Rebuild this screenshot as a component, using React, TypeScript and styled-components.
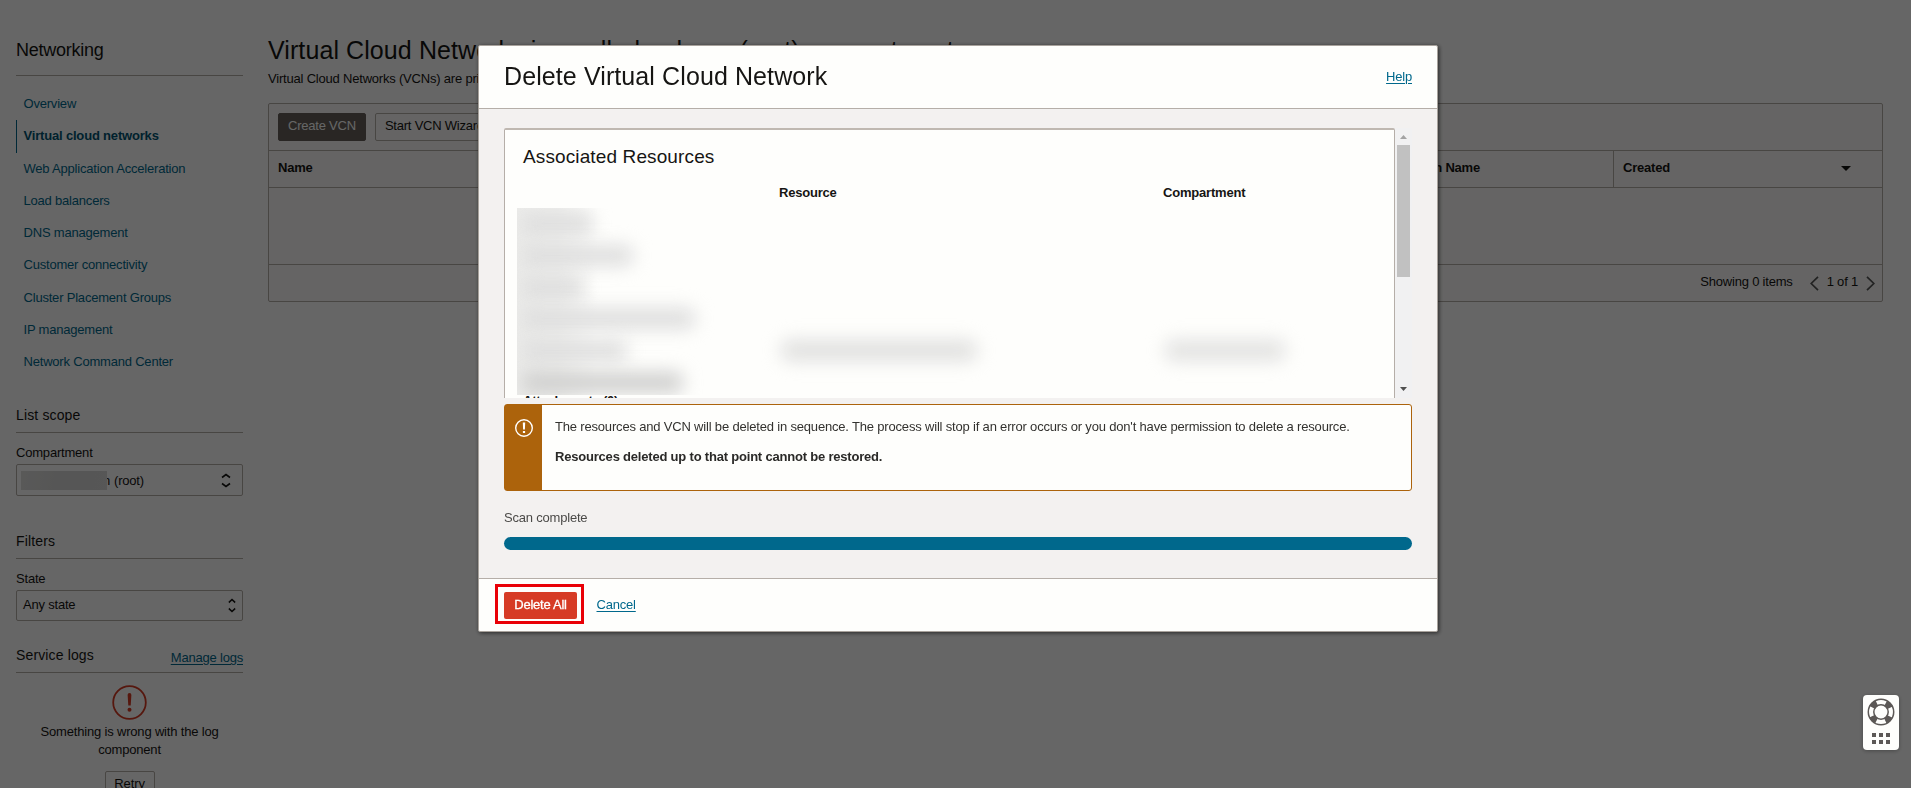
import React from "react";
import styled, { createGlobalStyle, css } from "styled-components";

const c = {
  text: "#161513",
  muted: "#4b4a48",
  link: "#00688c",
  line: "#b5aea8",
  surface: "#fefefc",
  sunken: "#f3f1f0",
  red: "#d63b25",
  amber: "#ac630c",
};

const Global = createGlobalStyle`
  * { box-sizing: border-box; }
  html, body { margin: 0; height: 100%; overflow: hidden; }
  body {
    background: #fff;
    color: ${c.text};
    font: 13px/18px "Liberation Sans", Arial, sans-serif;
    letter-spacing: -0.2px;
  }
  h1, h2, h3, p, ul { margin: 0; padding: 0; font-weight: 400; }
`;

const Page = styled.div`
  display: flex;
  width: 100vw;
  height: 100vh;
  overflow: hidden;
`;

const Link = styled.a`
  color: ${c.link};
  text-decoration: underline;
  text-underline-offset: 2px;
`;

/* ---------- sidebar ---------- */

const Sidebar = styled.aside`
  flex: none;
  width: 227px;
  margin-left: 16px;
  padding-top: 24px;
`;

const SideTitle = styled.h2`
  height: 52px;
  border-bottom: 1px solid ${c.line};
  font-size: 18px;
  line-height: 52px;
  letter-spacing: -0.25px;
`;

const Nav = styled.nav`
  display: flex;
  flex-direction: column;
  height: 303px;
  padding-top: 12px;
`;

const NavItem = styled.a<{ $active?: boolean }>`
  height: 32.3px;
  padding-left: 6.5px;
  border-left: 1px solid transparent;
  line-height: 32px;
  color: ${c.link};
  ${(p) =>
    p.$active &&
    css`
      border-color: ${c.link};
      color: #005472;
      font-weight: 700;
      letter-spacing: -0.18px;
    `}
`;

const SectionHead = styled.div<{ $top: number }>`
  display: flex;
  justify-content: space-between;
  align-items: flex-start;
  height: 27px;
  margin-top: ${(p) => p.$top}px;
  border-bottom: 1px solid ${c.line};
`;

const SectionTitle = styled.h3`
  font-size: 14px;
  line-height: 18px;
  letter-spacing: 0.14px;
`;

const ManageLink = styled(Link)`
  padding-top: 3px;
`;

const FieldLabel = styled.div`
  margin-top: 11px;
  height: 20px;
`;

const SelectBox = styled.div<{ $h: number; $right: number }>`
  display: flex;
  align-items: center;
  justify-content: space-between;
  height: ${(p) => p.$h}px;
  padding: 0 ${(p) => p.$right}px 0 6px;
  border: 1px solid ${c.line};
  border-radius: 2px;
`;

const Scope = styled.span`
  display: flex;
  align-items: center;
  margin-left: -2px;
  padding-top: 1px;
`;

const SelectValue = styled.span`
  padding-bottom: 1px;
`;

const Redacted = styled.span`
  width: 86px;
  height: 19px;
  margin-top: -1px;
  background: linear-gradient(100deg, #dfdfdd, #d6d6d6 50%, #d9d9d9);
`;

const ClippedLetter = styled.span`
  display: flex;
  justify-content: flex-end;
  width: 3px;
  margin-right: 4px;
  overflow: hidden;
`;

const LogError = styled.div`
  display: flex;
  flex-direction: column;
  align-items: center;
  padding: 12px 20px 0;
  text-align: center;
  letter-spacing: -0.18px;
  p { margin-top: 3px; }
`;

const RetryButton = styled.button`
  width: 50px;
  height: 28px;
  margin-top: 12px;
  padding: 0 0 3px;
  border: 1px solid ${c.line};
  border-radius: 2px;
  background: transparent;
  color: ${c.text};
  font: inherit;
  letter-spacing: -0.1px;
`;

/* ---------- main list ---------- */

const Main = styled.main`
  flex: none;
  width: 1615px;
  margin-left: 25px;
  padding-top: 33px;
`;

const Title = styled.h1`
  font-size: 25px;
  line-height: 34px;
  letter-spacing: 0.09px;
  white-space: nowrap;
`;

const Subtitle = styled.p`
  margin-top: 3px;
  height: 33px;
  white-space: nowrap;
`;

const Panel = styled.section`
  display: flex;
  flex-direction: column;
  height: 199px;
  border: 1px solid ${c.line};
  border-radius: 2px;
  background: #fcfbfa;
`;

const Toolbar = styled.div`
  display: flex;
  gap: 9px;
  height: 47px;
  padding: 9px;
  border-bottom: 1px solid ${c.line};
`;

const Button = styled.button<{ $dark?: boolean }>`
  height: 28px;
  padding: 0 9px 3px;
  border: 1px solid ${(p) => (p.$dark ? "#665f5b" : c.line)};
  border-radius: 2px;
  background: ${(p) => (p.$dark ? "#665f5b" : "transparent")};
  color: ${(p) => (p.$dark ? "#fff" : c.text)};
  font: inherit;
  letter-spacing: -0.22px;
  white-space: nowrap;
`;

const HeadRow = styled.div`
  display: flex;
  height: 37px;
  border-bottom: 1px solid ${c.line};
`;

const HeadCell = styled.div`
  flex: 1 1 0;
  padding: 8px 9px 0;
  font-weight: 700;
`;

const DomainCell = styled(HeadCell)`
  flex: none;
  padding-right: 133px;
`;

const CreatedCell = styled(HeadCell)`
  display: flex;
  justify-content: space-between;
  flex: 0 0 269px;
  padding-right: 31px;
  border-left: 1px solid ${c.line};
  svg { margin-top: 7px; }
`;

const EmptyRow = styled.div`
  height: 77px;
  border-bottom: 1px solid ${c.line};
`;

const Footer = styled.div`
  display: flex;
  flex: 1;
  justify-content: flex-end;
  align-items: center;
  padding: 0 7px 2px 0;
  svg { margin-top: 3px; }
`;

const Count = styled.span`
  margin-right: 17px;
`;

const PageNo = styled.span`
  margin: 0 8px;
`;

/* ---------- dialog ---------- */

const Backdrop = styled.div`
  position: fixed;
  inset: 0;
  padding: 45px 0 0 478px;
  background: rgba(0, 0, 0, 0.6);
`;

const Dialog = styled.div`
  display: flex;
  flex-direction: column;
  width: 960px;
  height: 587px;
  border: 1px solid #a8a29c;
  border-radius: 2px;
  background: ${c.surface};
  box-shadow: 1px 1px 4px rgba(0, 0, 0, 0.6);
`;

const DialogHead = styled.header`
  display: flex;
  justify-content: space-between;
  align-items: center;
  height: 63px;
  padding: 0 25px;
  border-bottom: 1px solid ${c.line};
`;

const DialogTitle = styled.h2`
  padding-bottom: 2px;
  font-size: 25px;
  line-height: 60px;
  letter-spacing: 0.1px;
`;

const DialogBody = styled.div`
  flex: 1;
  padding: 19px 25px 0;
  background: ${c.sunken};
`;

const ScrollArea = styled.div`
  display: flex;
  height: 270px;
  overflow: hidden;
`;

const Resources = styled.div`
  width: 891px;
  height: 290px;
  padding: 16px 12px 0;
  border: 1px solid ${c.line};
  border-top: 2px solid #bfb8b1;
  border-radius: 2px 2px 0 0;
  background: ${c.surface};
`;

const ResourcesTitle = styled.h3`
  padding-left: 6px;
  font-size: 19px;
  line-height: 22px;
  letter-spacing: 0.12px;
`;

const ResourceHead = styled.div`
  display: grid;
  grid-template-columns: 256px 384px 1fr;
  margin-top: 16px;
  padding-left: 6px;
  height: 24px;
  font-weight: 700;
`;

const ResourceRows = styled.div`
  display: flex;
  flex-direction: column;
  height: 187px;
  overflow: hidden;
  background: linear-gradient(90deg, #ececea, rgba(236, 236, 234, 0.85) 40px, rgba(254, 254, 252, 0) 80px);
`;

const ResourceRow = styled.div`
  display: flex;
  align-items: center;
  flex: none;
  height: 31.7px;
`;

const Smudge = styled.span<{ $w: number; $x?: number; $tone?: string }>`
  flex: none;
  width: ${(p) => p.$w}px;
  height: 21px;
  margin-left: ${(p) => p.$x ?? 0}px;
  border-radius: 8px;
  background: ${(p) => p.$tone ?? "#dedede"};
  filter: blur(9px);
`;

const Attachments = styled.div`
  margin-top: -3px;
  padding-left: 6px;
  font-weight: 700;
  clip-path: inset(3px 0 0 0);
`;

const Scrollbar = styled.div`
  display: flex;
  flex-direction: column;
  align-items: center;
  width: 17px;
  height: 270px;
  background: #f1f1f2;
`;

const Arrow = styled.span<{ $down?: boolean }>`
  display: flex;
  justify-content: center;
  height: 17px;
  padding-top: ${(p) => (p.$down ? 6 : 7)}px;
  margin-top: ${(p) => (p.$down ? "auto" : "0")};
`;

const Thumb = styled.span`
  width: 13px;
  height: 132px;
  background: #c1c1c1;
`;

const Alert = styled.div`
  display: flex;
  height: 87px;
  margin-top: 6px;
  border: 1px solid ${c.amber};
  border-radius: 3px;
  background: ${c.surface};
`;

const AlertBand = styled.div`
  display: flex;
  justify-content: center;
  align-items: flex-start;
  width: 37px;
  padding: 14px 0 0 1px;
  background: ${c.amber};
`;

const AlertText = styled.div`
  padding: 13px 0 0 13px;
  color: #33322f;
  letter-spacing: -0.18px;
  p + p { margin-top: 12px; font-weight: 700; color: #2a2927; letter-spacing: -0.2px; }
`;

const ScanLabel = styled.p`
  margin-top: 18px;
  color: ${c.muted};
`;

const Progress = styled.div`
  height: 13px;
  margin-top: 10px;
  border-radius: 7px;
  background: ${c.link};
`;

const DialogFoot = styled.footer`
  display: flex;
  align-items: flex-start;
  height: 53px;
  padding: 5px 16px;
  border-top: 1px solid ${c.line};
`;

const Highlight = styled.div`
  width: 89px;
  height: 40px;
  margin-right: 12.5px;
  padding: 5px 6px;
  border: 3px solid #e90007;
`;

const DeleteButton = styled.button`
  width: 73px;
  height: 27px;
  padding: 0 0 2px;
  border: 0;
  border-radius: 2px;
  background: ${c.red};
  color: #fff;
  font: inherit;
  letter-spacing: -0.25px;
  -webkit-text-stroke: 0.3px #fff;
`;

const Cancel = styled(Link)`
  padding-top: 12px;
`;

const HelpWidget = styled.div`
  position: fixed;
  left: 1863px;
  top: 695px;
  display: flex;
  flex-direction: column;
  align-items: center;
  gap: 7px;
  width: 36px;
  height: 55px;
  padding-top: 3px;
  border-radius: 4px;
  background: ${c.surface};
  box-shadow: 0 1px 4px rgba(0, 0, 0, 0.3);
`;

const Dots = styled.div`
  display: grid;
  grid-template-columns: repeat(3, 4px);
  gap: 3px;
  i { width: 4px; height: 4px; background: #5c5856; }
`;

/* ---------- icons ---------- */

const UpDown = ({ w = 10 }: { w?: number }) => (
  <svg width={w} height="15" viewBox="0 0 10 15" preserveAspectRatio="none" fill="none" stroke={c.text} strokeWidth="1.6">
    <path d="M1 4.5 5 1.5 9 4.5M1 10.5 5 13.5 9 10.5" />
  </svg>
);

const Chevron = ({ right }: { right?: boolean }) => (
  <svg width="9" height="15" viewBox="0 0 9 15" fill="none" stroke="#555" strokeWidth="1.7">
    <path d={right ? "M1 .8 7.8 7.5 1 14.2" : "M8 .8 1.2 7.5 8 14.2"} />
  </svg>
);

const ErrorIcon = () => (
  <svg width="35" height="35" viewBox="0 0 35 35">
    <circle cx="17.5" cy="17.5" r="16.3" fill="none" stroke={c.red} strokeWidth="1.8" />
    <path d="M15.6 10a1.9 1.9 0 0 1 3.8 0l-.7 10.4h-2.4z" fill={c.red} />
    <circle cx="17.5" cy="24.8" r="2" fill={c.red} />
  </svg>
);

const WarnIcon = () => (
  <svg width="18" height="18" viewBox="0 0 18 18">
    <circle cx="9" cy="9" r="8.3" fill="none" stroke="#fff" strokeWidth="1.4" />
    <path d="M7.8 3.6h2.4l-.3 7H8.1zM7.9 12h2.2v2.1H7.9z" fill="#fff" />
  </svg>
);

const LifeRing = () => (
  <svg width="28" height="28" viewBox="0 0 28 28" fill="none">
    <circle cx="14" cy="14" r="10" stroke="#5c5856" strokeWidth="6" strokeDasharray="6.4 9.308" strokeDashoffset="-4.65" />
    <circle cx="14" cy="14" r="12.7" stroke="#5c5856" strokeWidth="1.5" />
    <circle cx="14" cy="14" r="7.2" stroke="#5c5856" strokeWidth="1.5" />
  </svg>
);

const navItems = [
  "Overview",
  "Virtual cloud networks",
  "Web Application Acceleration",
  "Load balancers",
  "DNS management",
  "Customer connectivity",
  "Cluster Placement Groups",
  "IP management",
  "Network Command Center",
];

const smudges = [72, 112, 62, 174, 106, 162];

export default function App() {
  return (
    <>
      <Global />
      <Page>
        <Sidebar>
          <SideTitle>Networking</SideTitle>
          <Nav>
            {navItems.map((item) => (
              <NavItem key={item} $active={item === "Virtual cloud networks"}>
                {item}
              </NavItem>
            ))}
          </Nav>
          <SectionHead $top={27}>
            <SectionTitle>List scope</SectionTitle>
          </SectionHead>
          <FieldLabel>Compartment</FieldLabel>
          <SelectBox $h={32} $right={11}>
            <Scope>
              <Redacted />
              <ClippedLetter>n</ClippedLetter>
              (root)
            </Scope>
            <UpDown />
          </SelectBox>
          <SectionHead $top={36}>
            <SectionTitle>Filters</SectionTitle>
          </SectionHead>
          <FieldLabel>State</FieldLabel>
          <SelectBox $h={31} $right={6}>
            <SelectValue>Any state</SelectValue>
            <UpDown w={8} />
          </SelectBox>
          <SectionHead $top={25}>
            <SectionTitle>Service logs</SectionTitle>
            <ManageLink>Manage logs</ManageLink>
          </SectionHead>
          <LogError>
            <ErrorIcon />
            <p>Something is wrong with the log component</p>
            <RetryButton>Retry</RetryButton>
          </LogError>
        </Sidebar>
        <Main>
          <Title>Virtual Cloud Networks in morllarbeahena (root) compartment</Title>
          <Subtitle>Virtual Cloud Networks (VCNs) are private virtual networks</Subtitle>
          <Panel>
            <Toolbar>
              <Button $dark>Create VCN</Button>
              <Button>Start VCN Wizard</Button>
            </Toolbar>
            <HeadRow>
              <HeadCell>Name</HeadCell>
              <DomainCell>DNS Domain Name</DomainCell>
              <CreatedCell>
                Created
                <svg width="10" height="5" viewBox="0 0 10 5">
                  <path d="M0 0h10L5 5z" fill={c.text} />
                </svg>
              </CreatedCell>
            </HeadRow>
            <EmptyRow />
            <Footer>
              <Count>Showing 0 items</Count>
              <Chevron />
              <PageNo>1 of 1</PageNo>
              <Chevron right />
            </Footer>
          </Panel>
        </Main>
      </Page>
      <Backdrop>
        <Dialog role="dialog">
          <DialogHead>
            <DialogTitle>Delete Virtual Cloud Network</DialogTitle>
            <Link>Help</Link>
          </DialogHead>
          <DialogBody>
            <ScrollArea>
              <Resources>
                <ResourcesTitle>Associated Resources</ResourcesTitle>
                <ResourceHead>
                  <span />
                  <span>Resource</span>
                  <span>Compartment</span>
                </ResourceHead>
                <ResourceRows>
                  {smudges.map((w, i) => (
                    <ResourceRow key={i}>
                      <Smudge $w={w} $x={4} $tone={i === 5 ? "#cfcfce" : undefined} />
                      {i === 4 && (
                        <>
                          <Smudge $w={196} $x={154} $tone="#e0e0df" />
                          <Smudge $w={120} $x={188} $tone="#e2e2e1" />
                        </>
                      )}
                    </ResourceRow>
                  ))}
                </ResourceRows>
                <Attachments>Attachments (0)</Attachments>
              </Resources>
              <Scrollbar>
                <Arrow>
                  <svg width="7" height="4" viewBox="0 0 7 4">
                    <path d="M0 4h7L3.5 0z" fill="#a3a3a3" />
                  </svg>
                </Arrow>
                <Thumb />
                <Arrow $down>
                  <svg width="7" height="4" viewBox="0 0 7 4">
                    <path d="M0 0h7L3.5 4z" fill="#505050" />
                  </svg>
                </Arrow>
              </Scrollbar>
            </ScrollArea>
            <Alert>
              <AlertBand>
                <WarnIcon />
              </AlertBand>
              <AlertText>
                <p>
                  The resources and VCN will be deleted in sequence. The process will stop if an error occurs or you
                  don't have permission to delete a resource.
                </p>
                <p>Resources deleted up to that point cannot be restored.</p>
              </AlertText>
            </Alert>
            <ScanLabel>Scan complete</ScanLabel>
            <Progress />
          </DialogBody>
          <DialogFoot>
            <Highlight>
              <DeleteButton>Delete All</DeleteButton>
            </Highlight>
            <Cancel>Cancel</Cancel>
          </DialogFoot>
        </Dialog>
      </Backdrop>
      <HelpWidget>
        <LifeRing />
        <Dots>
          {Array.from({ length: 6 }, (_, i) => (
            <i key={i} />
          ))}
        </Dots>
      </HelpWidget>
    </>
  );
}
